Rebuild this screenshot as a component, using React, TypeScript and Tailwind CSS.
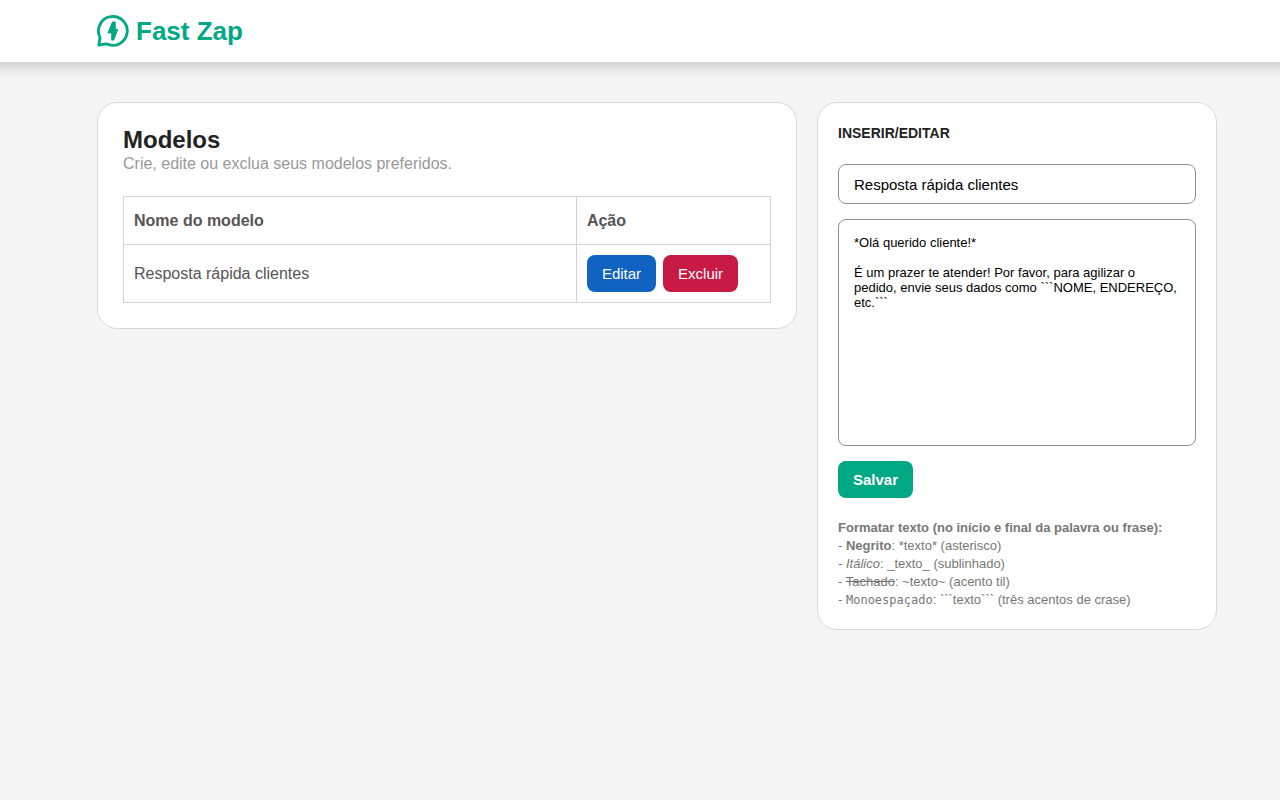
import { useState } from "react";

interface Template {
  id: number;
  name: string;
  body: string;
}

const templates: Template[] = [
  {
    id: 1,
    name: "Resposta rápida clientes",
    body: "*Olá querido cliente!*\n\nÉ um prazer te atender! Por favor, para agilizar o pedido, envie seus dados como ```NOME, ENDEREÇO, etc.```",
  },
];

function Logo() {
  return (
    <svg viewBox="0 0 32 32" className="h-8 w-8" fill="none" aria-hidden="true">
      <path
        d="M1.8 30 3.1 22.6A14.4 14.4 0 1 1 9.4 28.8Z"
        stroke="#00a884"
        strokeWidth="2.8"
        strokeLinejoin="round"
      />
      <path
        d="M15.6 7h2.6v7.6h2.3L16.7 25h-1.9V17.6h-3.7Z"
        fill="#00a884"
        stroke="#00a884"
        strokeWidth="1.1"
        strokeLinejoin="round"
      />
    </svg>
  );
}

function Header() {
  return (
    <header className="bg-white pl-[97px] pr-[63px] py-[15px] shadow-[0_-20px_16px_20px_rgba(0,0,0,0.3)]">
      <a href="#" className="inline-flex h-8 items-center gap-[7px] align-top text-[26px] font-bold text-[#00a884]">
        <Logo />
        Fast Zap
      </a>
    </header>
  );
}

interface TemplateListProps {
  onEdit: (template: Template) => void;
}

function TemplateList({ onEdit }: TemplateListProps) {
  return (
    <section className="rounded-[20px] border border-[#d9d9d9] bg-white p-[25px]">
      <h1 className="text-2xl leading-6 font-bold text-[#222]">Modelos</h1>
      <p className="text-base leading-6 text-[#999]">Crie, edite ou exclua seus modelos preferidos.</p>

      <table className="mt-5 w-full table-fixed border-collapse text-left text-base text-[#555]">
        <thead>
          <tr className="h-12">
            <th className="w-[70%] border border-[#d3d3d3] px-[10px] font-bold">Nome do modelo</th>
            <th className="border border-[#d3d3d3] px-[10px] font-bold">Ação</th>
          </tr>
        </thead>
        <tbody>
          {templates.map((template) => (
            <tr key={template.id}>
              <td className="border border-[#d3d3d3] p-[10px]">{template.name}</td>
              <td className="border border-[#d3d3d3] p-[10px]">
                <div className="flex gap-[7px] text-[15px] leading-[17px] text-white">
                  <button
                    type="button"
                    onClick={() => onEdit(template)}
                    className="rounded-lg bg-[#1063c1] px-[15px] py-[10px]"
                  >
                    Editar
                  </button>
                  <button type="button" className="rounded-lg bg-[#c71b45] px-[15px] py-[10px]">
                    Excluir
                  </button>
                </div>
              </td>
            </tr>
          ))}
        </tbody>
      </table>
    </section>
  );
}

function FormatHelp() {
  return (
    <div className="mt-[21px] text-[13px] leading-[18px] text-[#777]">
      <p className="font-bold">Formatar texto (no início e final da palavra ou frase):</p>
      <p>
        - <b>Negrito</b>: *texto* (asterisco)
      </p>
      <p>
        - <i>Itálico</i>: _texto_ (sublinhado)
      </p>
      <p>
        - <s>Tachado</s>: ~texto~ (acento til)
      </p>
      <p>
        - <span className="font-['DejaVu_Sans_Mono',monospace] text-xs">Monoespaçado</span>: ```texto``` (três acentos
        de crase)
      </p>
    </div>
  );
}

interface EditorProps {
  name: string;
  body: string;
  onNameChange: (value: string) => void;
  onBodyChange: (value: string) => void;
}

function Editor({ name, body, onNameChange, onBodyChange }: EditorProps) {
  return (
    <section className="rounded-[20px] border border-[#d9d9d9] bg-white p-5">
      <h2 className="text-sm font-bold text-[#222]">INSERIR/EDITAR</h2>

      <form className="mt-[21px] flex flex-col items-start gap-[15px]" onSubmit={(e) => e.preventDefault()}>
        <input
          type="text"
          aria-label="Nome do modelo"
          value={name}
          onChange={(e) => onNameChange(e.target.value)}
          className="h-10 w-full rounded-lg border border-[#8f8f8f] px-[15px] text-[15px] text-black"
        />
        <textarea
          aria-label="Texto do modelo"
          rows={13}
          value={body}
          onChange={(e) => onBodyChange(e.target.value)}
          className="block w-full resize-none rounded-lg border border-[#8f8f8f] p-[15px] text-[13px] leading-[15px] text-black"
        />
        <button
          type="submit"
          className="rounded-lg bg-[#00a884] px-[15px] py-[10px] text-[15px] leading-[17px] font-bold text-white"
        >
          Salvar
        </button>
      </form>

      <FormatHelp />
    </section>
  );
}

export default function App() {
  const [name, setName] = useState(templates[0].name);
  const [body, setBody] = useState(templates[0].body);

  const handleEdit = (template: Template) => {
    setName(template.name);
    setBody(template.body);
  };

  return (
    <div className="min-h-screen bg-[#f5f5f5] font-['Liberation_Sans',Arial,sans-serif]">
      <Header />
      <main className="grid grid-cols-[7fr_4fr] items-start gap-5 py-10 pl-[97px] pr-[63px]">
        <TemplateList onEdit={handleEdit} />
        <Editor name={name} body={body} onNameChange={setName} onBodyChange={setBody} />
      </main>
    </div>
  );
}
